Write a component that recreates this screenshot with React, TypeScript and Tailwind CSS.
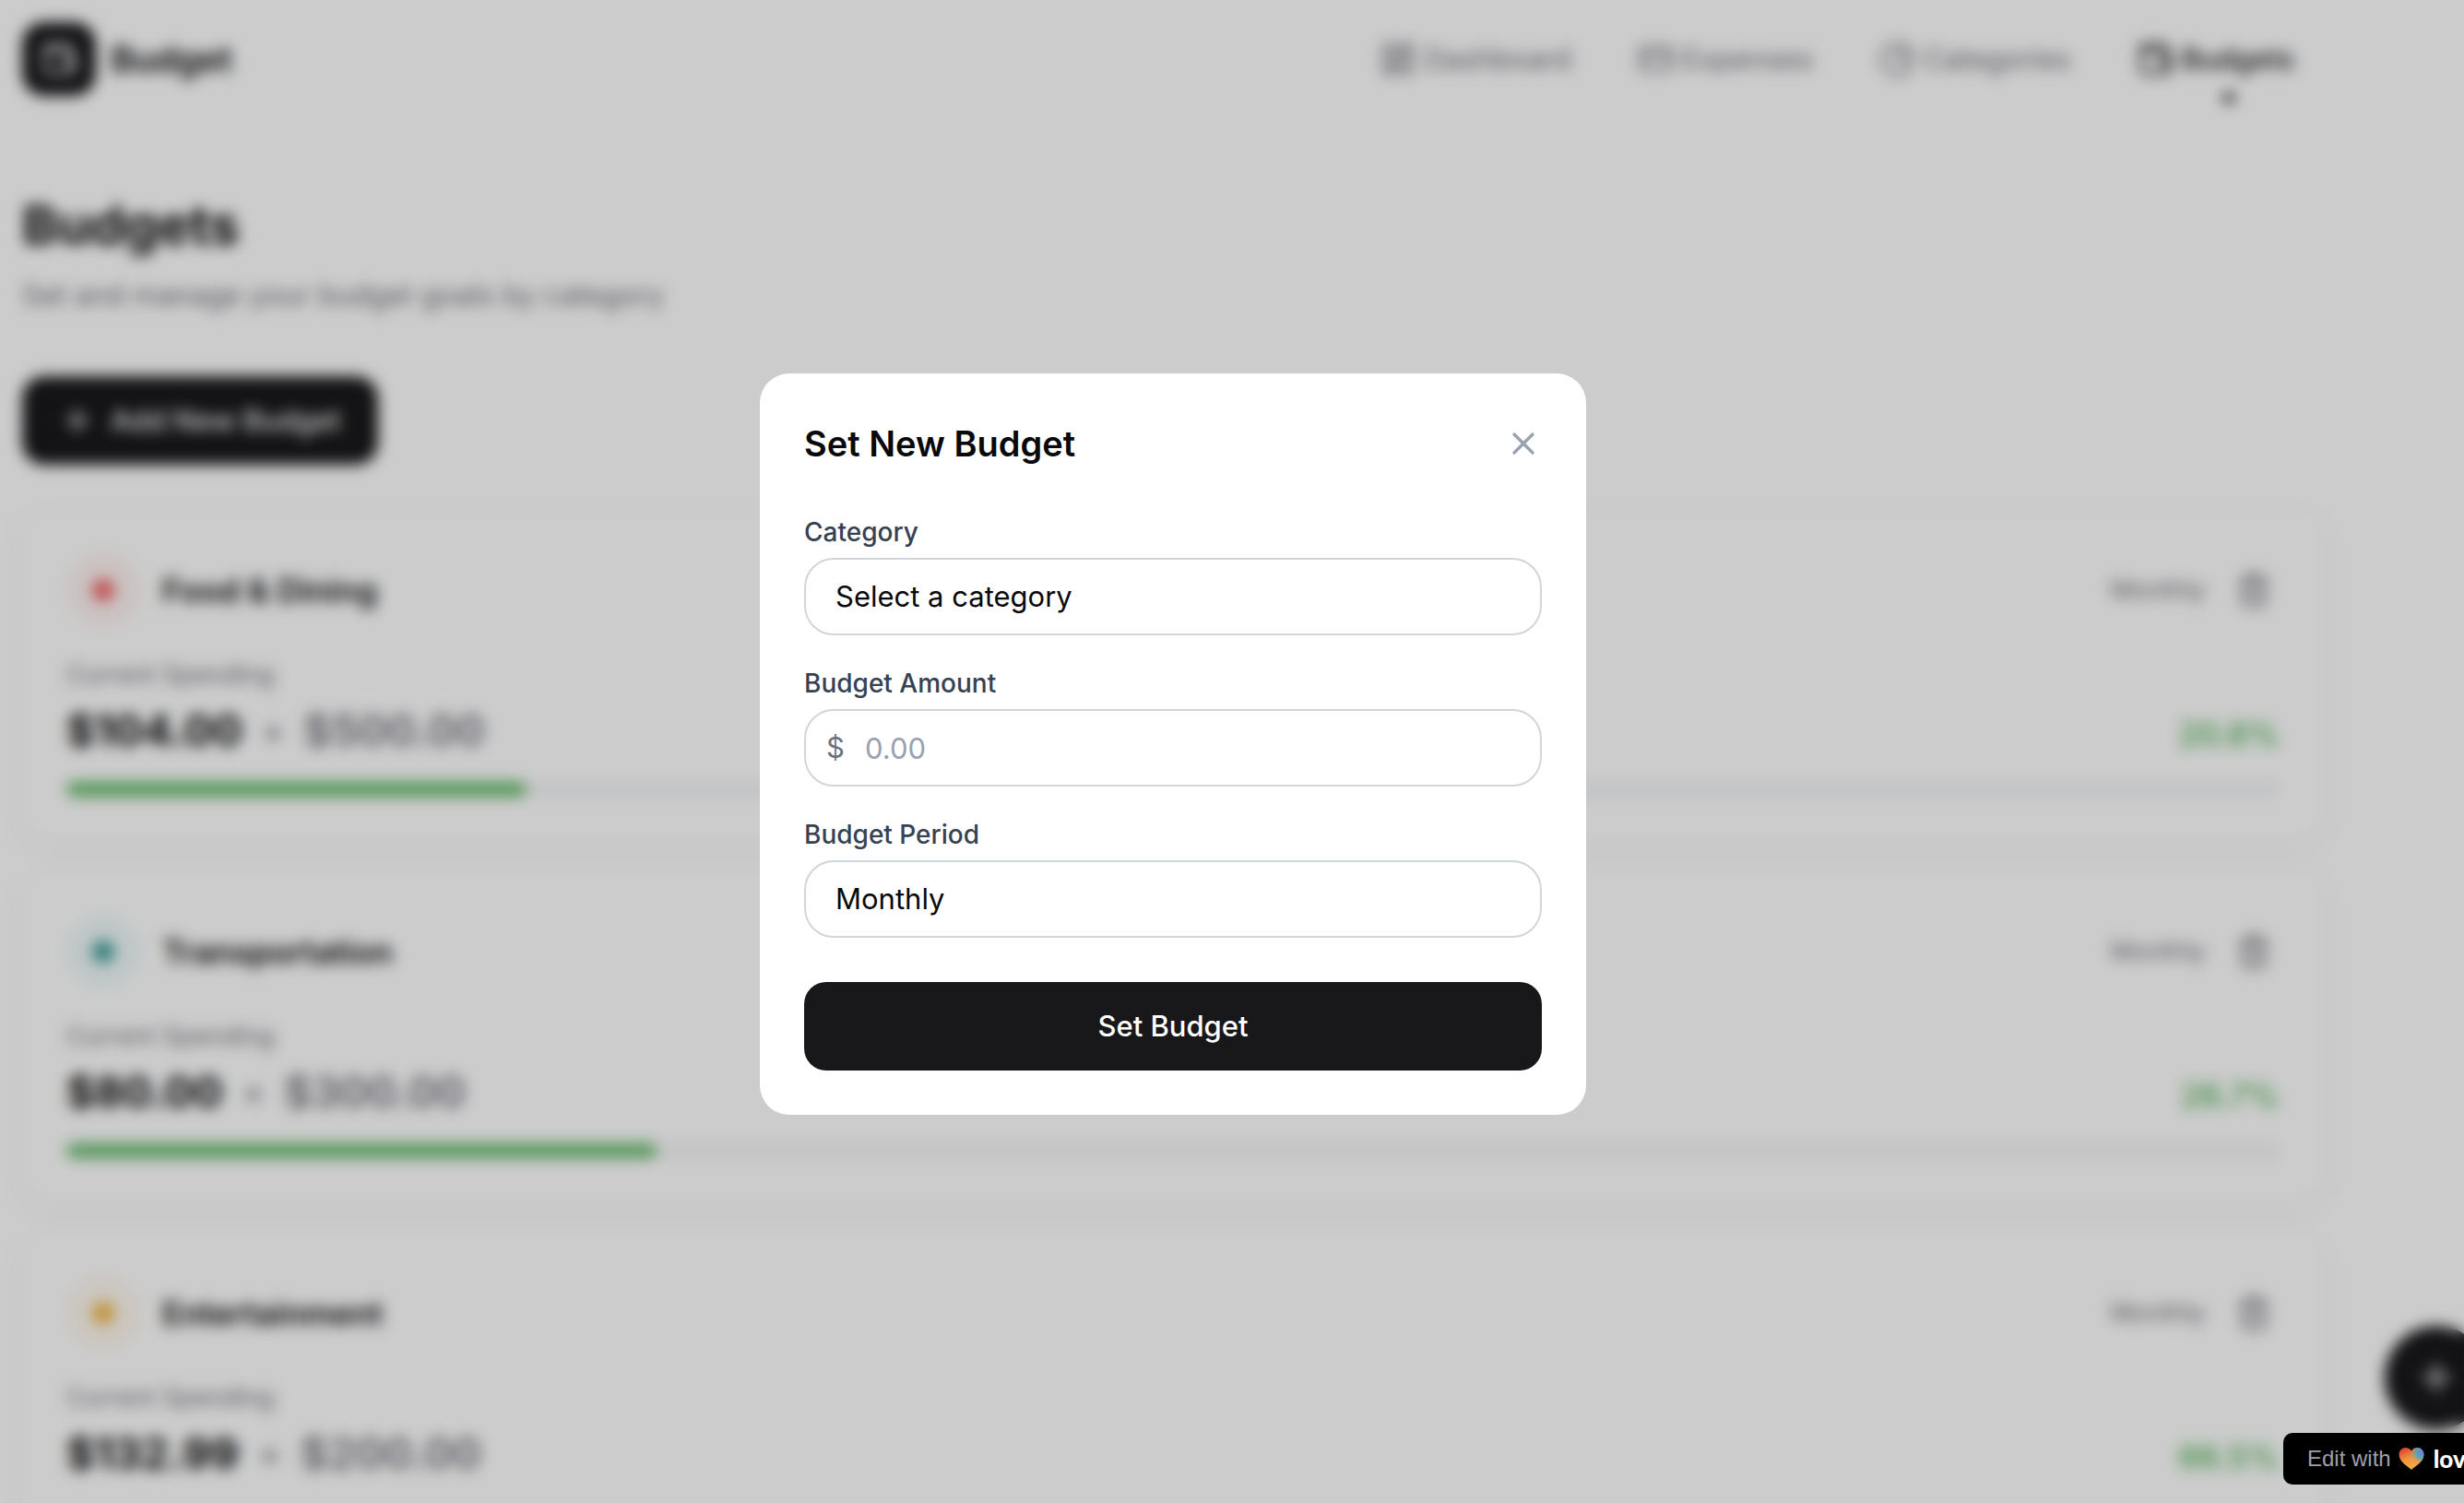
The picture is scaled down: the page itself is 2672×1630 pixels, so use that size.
import { CreditCard, LayoutDashboard, PieChart, Plus, Trash2, Wallet, X } from "lucide-react";

const navItems = [
  { label: "Dashboard", icon: LayoutDashboard, active: false },
  { label: "Expenses", icon: CreditCard, active: false },
  { label: "Categories", icon: PieChart, active: false },
  { label: "Budgets", icon: Wallet, active: true },
];

const budgets = [
  { name: "Food & Dining", dot: "bg-[#f06262]", halo: "bg-[#f06262]/8", spent: 104, limit: 500 },
  { name: "Transportation", dot: "bg-[#3a9d95]", halo: "bg-[#45b7d1]/8", spent: 80, limit: 300 },
  { name: "Entertainment", dot: "bg-[#f2b53f]", halo: "bg-[#f2b53f]/8", spent: 132.99, limit: 200 },
];

function Header() {
  return (
    <header className="flex h-32 items-center justify-between">
      <a href="#home" className="flex items-center gap-4">
        <span className="flex size-20 items-center justify-center rounded-3xl bg-[#18181b] text-white">
          <Wallet className="size-10" />
        </span>
        <span className="text-[38px] leading-14 font-semibold">Budget</span>
      </a>
      <nav className="flex gap-2">
        {navItems.map(({ label, icon: Icon, active }) => (
          <a
            key={label}
            href={`#${label.toLowerCase()}`}
            aria-current={active ? "page" : undefined}
            className={
              active
                ? "relative flex items-center gap-2 px-8 py-4 text-[31px] leading-12 font-medium text-[#18181b]"
                : "flex items-center gap-2 px-8 py-4 text-[31px] leading-12 text-zinc-500"
            }
          >
            <Icon className="size-10" />
            {label}
            {active && <span className="absolute bottom-[-8px] left-1/2 ml-2 size-3 rounded-full bg-[#18181b]" />}
          </a>
        ))}
      </nav>
    </header>
  );
}

function BudgetCard({ name, dot, halo, spent, limit }: (typeof budgets)[number]) {
  const percent = (spent / limit) * 100;
  return (
    <article className="rounded-[32px] bg-white p-12 shadow-[0_8px_32px_rgba(0,0,0,0.04)]">
      <div className="flex items-center justify-between">
        <div className="flex items-center gap-6">
          <span className={`flex size-20 items-center justify-center rounded-full ${halo}`}>
            <span className={`size-6 rounded-full ${dot}`} />
          </span>
          <h2 className="text-[35px] leading-14 font-semibold">{name}</h2>
        </div>
        <div className="flex items-center gap-6 text-zinc-500">
          <span className="text-[27px] leading-10">Monthly</span>
          <button type="button" aria-label={`Delete ${name} budget`} className="p-2">
            <Trash2 className="size-10" />
          </button>
        </div>
      </div>
      <div className="mt-8 flex items-end justify-between">
        <div>
          <p className="text-[27px] leading-10 text-zinc-500">Current Spending</p>
          <p className="mt-2 flex items-center gap-5 text-[47px] leading-16">
            <span className="font-bold">${spent.toFixed(2)}</span>
            <span className="text-zinc-400">•</span>
            <span className="font-semibold text-zinc-500">${limit.toFixed(2)}</span>
          </p>
        </div>
        <span className="text-[35px] leading-14 font-medium text-[#4caf50]">{percent.toFixed(1)}%</span>
      </div>
      <div className="mt-6 h-4 overflow-hidden rounded-full bg-gray-100">
        <div className="h-full rounded-full bg-[#66bb6a]" style={{ width: `${percent}%` }} />
      </div>
    </article>
  );
}

function Heart() {
  return (
    <svg viewBox="0 0 28 25" className="h-6 w-7" aria-hidden="true">
      <defs>
        <linearGradient id="warm" x1="0.1" y1="0" x2="0.6" y2="1">
          <stop offset="0.1" stopColor="#e0492f" />
          <stop offset="0.5" stopColor="#ee9440" />
          <stop offset="1" stopColor="#f5b041" />
        </linearGradient>
        <radialGradient id="cool" cx="0.95" cy="0.22" r="0.55">
          <stop offset="0" stopColor="#6f7fe0" />
          <stop offset="0.45" stopColor="#4fa3c4" stopOpacity="0.95" />
          <stop offset="1" stopColor="#c9a05a" stopOpacity="0" />
        </radialGradient>
      </defs>
      <path
        fill="url(#warm)"
        d="M14 25C11 21.500 0 16.500 0 7.800C0 3.500 3.300 0 7.400 0C10.200 0 12.700 1.300 14 3.800C15.300 1.300 17.800 0 20.600 0C24.700 0 28 3.500 28 7.800C28 16.500 17 21.500 14 25Z"
      />
      <path
        fill="url(#cool)"
        d="M14 25C11 21.500 0 16.500 0 7.800C0 3.500 3.300 0 7.400 0C10.200 0 12.700 1.300 14 3.800C15.300 1.300 17.800 0 20.600 0C24.700 0 28 3.500 28 7.800C28 16.500 17 21.500 14 25Z"
      />
    </svg>
  );
}

const fieldClass =
  "block h-21 w-full appearance-none rounded-[32px] border-2 border-gray-300 bg-white text-[31px] leading-12 text-[#09090b] outline-none placeholder:text-gray-400";
const labelClass = "mb-2 block text-[28px] leading-10 font-medium text-gray-700";

function BudgetDialog() {
  return (
    <div role="dialog" aria-modal="true" aria-labelledby="dialog-title" className="w-full max-w-4xl rounded-[32px] bg-white p-12">
      <div className="flex items-center justify-between">
        <h2 id="dialog-title" className="text-[38px] leading-14 font-semibold text-[#09090b]">
          Set New Budget
        </h2>
        <button type="button" aria-label="Close" className="text-gray-400">
          <X className="size-10" />
        </button>
      </div>
      <form className="mt-12 flex flex-col gap-8">
        <div>
          <label htmlFor="category" className={labelClass}>
            Category
          </label>
          <select id="category" className={`${fieldClass} px-8`}>
            <option>Select a category</option>
          </select>
        </div>
        <div>
          <label htmlFor="amount" className={labelClass}>
            Budget Amount
          </label>
          <div className="relative">
            <span className="absolute inset-y-0 left-6 flex items-center text-[31px] text-gray-500">$</span>
            <input id="amount" type="text" placeholder="0.00" className={`${fieldClass} pr-8 pl-16`} />
          </div>
        </div>
        <div>
          <label htmlFor="period" className={labelClass}>
            Budget Period
          </label>
          <select id="period" className={`${fieldClass} px-8`}>
            <option>Monthly</option>
          </select>
        </div>
        <button type="submit" className="mt-4 h-24 rounded-3xl bg-[#18181b] text-[31px] leading-12 font-medium text-white">
          Set Budget
        </button>
      </form>
    </div>
  );
}

export default function App() {
  return (
    <div className="relative h-screen overflow-hidden bg-white font-[Inter,sans-serif] text-[#09090b]">
      <div className="pr-38 pl-6">
        <Header />
        <main className="mt-20">
          <h1 className="text-[58px] leading-18 font-bold">Budgets</h1>
          <p className="mt-4 text-[31px] leading-12 text-zinc-500">Set and manage your budget goals by category</p>
          <button
            type="button"
            className="mt-16 flex h-24 items-center gap-4 rounded-3xl bg-[#18181b] px-10 text-[31px] leading-12 font-medium text-white"
          >
            <Plus className="size-10" />
            Add New Budget
          </button>
          <section className="mt-12 flex flex-col gap-8">
            {budgets.map((budget) => (
              <BudgetCard key={budget.name} {...budget} />
            ))}
          </section>
        </main>
      </div>

      <button
        type="button"
        aria-label="Add expense"
        className="absolute right-[-26px] bottom-20 flex size-28 items-center justify-center rounded-full bg-[#18181b] text-white shadow-lg"
      >
        <Plus className="size-12" />
      </button>

      <div className="absolute inset-0 flex items-center justify-center bg-black/20 pr-32 pb-4 backdrop-blur-sm">
        <BudgetDialog />
      </div>

      <a
        href="#edit"
        className="absolute right-[-90px] bottom-5 flex h-14 w-[286px] items-center rounded-[10px] bg-black pl-[26px] font-['Liberation_Sans',sans-serif] text-[24px] whitespace-nowrap text-zinc-400"
      >
        Edit with
        <span className="mr-[10px] ml-2">
          <Heart />
        </span>
        <span className="font-[Lato,sans-serif] text-[26px] font-black text-white">lovable</span>
      </a>
    </div>
  );
}
